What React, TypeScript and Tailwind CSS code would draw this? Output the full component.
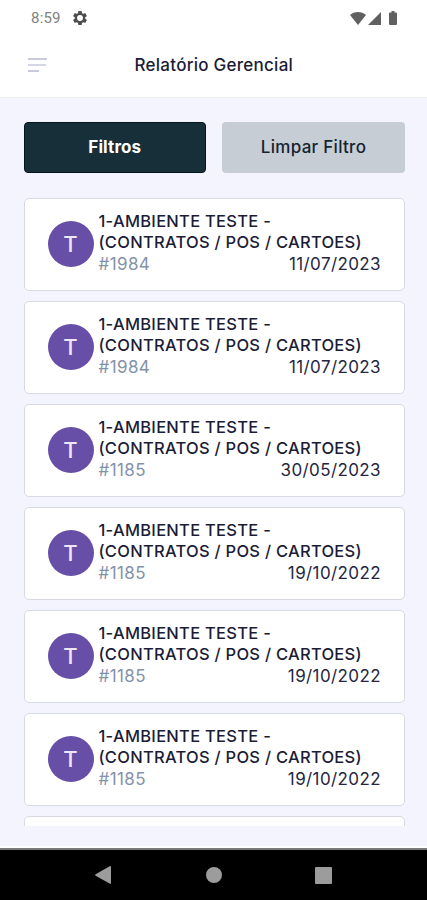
/**
 * Relatório Gerencial - management report screen with filter buttons
 * and a scrolling list of contracts
 */
import React from 'react'

interface Report {
  name: string[]
  code: string
  date: string
}

const NAME = ['1-AMBIENTE TESTE -', '(CONTRATOS / POS / CARTOES)']

const REPORTS: Report[] = [
  { name: NAME, code: '#1984', date: '11/07/2023' },
  { name: NAME, code: '#1984', date: '11/07/2023' },
  { name: NAME, code: '#1185', date: '30/05/2023' },
  { name: NAME, code: '#1185', date: '19/10/2022' },
  { name: NAME, code: '#1185', date: '19/10/2022' },
  { name: NAME, code: '#1185', date: '19/10/2022' },
]

const StatusBar: React.FC = () => (
  <div className="flex h-9 shrink-0 items-center justify-between pr-[30px] pl-[31px] text-[#606060]">
    <div className="flex items-center gap-[12px]">
      <span className="font-['Roboto',sans-serif] text-[15px] leading-9 tracking-[0.2px] text-[#808080]">8:59</span>
      <svg className="size-[14px]" viewBox="2 2 20 20" fill="#4d4d4d">
        <path
          fillRule="evenodd"
          d="M19.43 12.98c.04-.32.07-.64.07-.98s-.03-.66-.07-.98l2.11-1.65c.19-.15.24-.42.12-.64l-2-3.46c-.12-.22-.39-.3-.61-.22l-2.49 1c-.52-.4-1.08-.73-1.69-.98l-.38-2.65A.49.49 0 0 0 14 2h-4c-.25 0-.46.18-.49.42l-.38 2.65c-.61.25-1.17.59-1.69.98l-2.49-1c-.23-.09-.49 0-.61.22l-2 3.46c-.13.22-.07.49.12.64l2.11 1.65c-.04.32-.07.65-.07.98s.03.66.07.98l-2.11 1.65c-.19.15-.24.42-.12.64l2 3.46c.12.22.39.3.61.22l2.49-1c.52.4 1.08.73 1.69.98l.38 2.65c.03.24.24.42.49.42h4c.25 0 .46-.18.49-.42l.38-2.65c.61-.25 1.17-.59 1.69-.98l2.49 1c.23.09.49 0 .61-.22l2-3.46c.12-.22.07-.49-.12-.64l-2.11-1.65zM12 16.2a4.2 4.2 0 1 1 0-8.4 4.2 4.2 0 0 1 0 8.4z"
        />
      </svg>
    </div>
    <div className="flex items-center" aria-label="wifi, sinal, bateria">
      <svg className="h-[13px] w-4" viewBox="0 0 16 13" fill="currentColor">
        <path d="M8 13 0 3C2.200 1.100 5 0 8 0s5.800 1.100 8 3z" />
      </svg>
      <svg className="ml-0.5 h-[13px] w-[13px]" viewBox="0 0 13 13" fill="currentColor">
        <path d="M13 0v13H0z" />
      </svg>
      <svg className="ml-2 h-[14px] w-2" viewBox="0 0 8 14" fill="currentColor">
        <path d="M2.500 0h3v1.500H7q1 0 1 1V13q0 1-1 1H1q-1 0-1-1V2.500q0-1 1-1h1.500z" />
      </svg>
    </div>
  </div>
)

const Header: React.FC = () => (
  <header className="flex h-[62px] shrink-0 items-center border-b border-[#efeff4] pb-[3px] pl-7">
    <button className="flex w-5 flex-col gap-[4px]" aria-label="Menu">
      <span className="h-0.5 w-[19px] bg-[#c9cbdc]" />
      <span className="h-0.5 w-[18px] bg-[#d5d7e6]" />
      <span className="h-0.5 w-[11px] bg-[#c9cbdc]" />
    </button>
    <h1 className="ml-[86.500px] text-[17px] leading-5 font-medium tracking-[0.26px] whitespace-nowrap">
      Relatório Gerencial
    </h1>
  </header>
)

const ReportCard: React.FC<{ report: Report }> = ({ report }) => (
  <li className="flex h-[93px] shrink-0 items-center rounded-[5px] border border-[#d8dae2] bg-white px-[23px]">
    <div className="flex size-[46px] shrink-0 items-center justify-center rounded-full bg-[#674ea7] text-[22px] font-medium text-[#eee6fa]">
      T
    </div>
    <div className="ml-[5px] flex-1 pb-[3px] text-[16.500px] leading-[21px] whitespace-nowrap">
      {report.name.map((line) => (
        <p key={line} className="font-medium tracking-[0.27px]">
          {line}
        </p>
      ))}
      <div className="flex justify-between text-[17px] leading-[22px] tracking-[0.4px]">
        <span className="text-[#8492a8]">{report.code}</span>
        <span className="text-[#25263f]">{report.date}</span>
      </div>
    </div>
  </li>
)

const NavigationBar: React.FC = () => (
  <nav className="flex h-[52px] shrink-0 items-center border-t-2 border-[#7b7b7b] bg-black pl-[95px] text-[#9c9c9c]">
    <svg className="h-[18px] w-4" viewBox="0 0 16 18" fill="currentColor">
      <path d="M15 0q1 0 1 1v16q0 1.200-1 .8L.6 9.700q-1-.7 0-1.400L14.600.2z" />
    </svg>
    <span className="ml-[95px] size-4 rounded-full bg-[#9c9c9c]" />
    <span className="ml-[93px] size-[17px] rounded-[1px] bg-[#9c9c9c]" />
  </nav>
)

export default function App() {
  return (
    <div className="flex h-[900px] w-full flex-col overflow-hidden bg-white font-['Inter',sans-serif] text-[#1b1c36]">
      <StatusBar />
      <Header />
      <main className="flex h-[748px] shrink-0 flex-col bg-[#f3f4fd] pt-6 pl-[23.500px]">
        <div className="flex h-[51px] shrink-0 gap-4">
          <button className="w-[182.500px] rounded-[4px] border border-[#04161d] bg-[#172f38] text-[17px] font-bold tracking-[0.1px] text-white">
            Filtros
          </button>
          <button className="w-[183px] rounded-[4px] bg-[#c7cdd5] text-[17px] font-medium tracking-[0.3px] text-[#14242f]">
            Limpar Filtro
          </button>
        </div>
        <ul className="mt-[24.500px] flex h-[628.500px] w-[381.500px] shrink-0 flex-col gap-[10.100px] overflow-hidden">
          {REPORTS.map((report, i) => (
            <ReportCard key={i} report={report} />
          ))}
          {/* next card, cut off by the end of the list */}
          <li className="h-[93px] shrink-0 rounded-[5px] border border-[#d8dae2] bg-white" />
        </ul>
      </main>
      <div className="h-0.5 shrink-0 bg-white" />
      <NavigationBar />
    </div>
  )
}
